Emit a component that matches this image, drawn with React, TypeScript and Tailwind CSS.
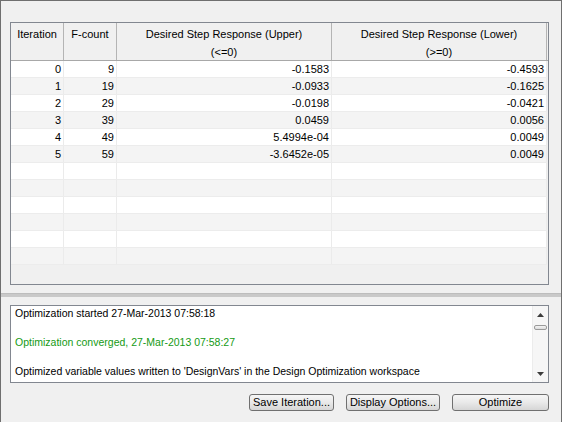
import React from "react";

// rows shown in the optimization progress table
const rows = [
  { it: "0", fc: "9", up: "-0.1583", lo: "-0.4593" },
  { it: "1", fc: "19", up: "-0.0933", lo: "-0.1625" },
  { it: "2", fc: "29", up: "-0.0198", lo: "-0.0421" },
  { it: "3", fc: "39", up: "0.0459", lo: "0.0056" },
  { it: "4", fc: "49", up: "5.4994e-04", lo: "0.0049" },
  { it: "5", fc: "59", up: "-3.6452e-05", lo: "0.0049" },
];

const emptyRows = 6;

const HeaderCell = ({ w, lines }: { w: string; lines: string[] }) => (
  <div className={`${w} h-full border-r border-[#b4b4b4] text-center pt-[2px] leading-[18px]`}>
    {lines.map((l) => (
      <div key={l}>{l}</div>
    ))}
  </div>
);

const Cell = ({ w, text }: { w: string; text?: string }) => (
  <div className={`${w} h-full border-r border-[#ebebeb] text-right pr-[2px] leading-[16px]`}>
    {text}
  </div>
);

const Button = ({ w, label }: { w: string; label: string }) => (
  <button
    type="button"
    className={`${w} h-[17px] rounded-[3px] border border-[#707070] bg-linear-to-b from-[#f6f6f6] via-[#e9e9e9] to-[#d6d6d6] text-[11px] leading-[15px] text-black`}
  >
    {label}
  </button>
);

const App: React.FC = () => {
  return (
    <div
      className="w-[562px] h-[422px] bg-[#f0f0f0] border-x border-t border-[#6f6f6f] flex flex-col text-black overflow-hidden"
      style={{ fontFamily: '"Liberation Sans", Arial, sans-serif' }}
    >
      {/* Table */}
      <div className="mt-[21px] ml-[9px] w-[539px] h-[263px] border border-[#828790] bg-[#f0f0f0] flex flex-col text-[11px]">
        <div className="h-[38px] flex border-b border-[#a8a8a8] shrink-0">
          <HeaderCell w="w-[53px]" lines={["Iteration"]} />
          <HeaderCell w="w-[53px]" lines={["F-count"]} />
          <HeaderCell w="w-[215px]" lines={["Desired Step Response (Upper)", "(<=0)"]} />
          <HeaderCell w="w-[215px]" lines={["Desired Step Response (Lower)", "(>=0)"]} />
        </div>
        {rows.map((r, i) => (
          <div
            key={r.it}
            className={`h-[17px] w-[536px] flex border-b border-[#ececec] shrink-0 ${i % 2 ? "bg-[#f4f4f4]" : "bg-white"}`}
          >
            <Cell w="w-[53px]" text={r.it} />
            <Cell w="w-[53px]" text={r.fc} />
            <Cell w="w-[215px]" text={r.up} />
            <Cell w="w-[215px]" text={r.lo} />
          </div>
        ))}
        {Array.from({ length: emptyRows }).map((_, i) => (
          <div
            key={i}
            className={`h-[17px] w-[536px] flex border-b border-[#ececec] shrink-0 ${i % 2 ? "bg-[#f4f4f4]" : "bg-white"}`}
          >
            <Cell w="w-[53px]" />
            <Cell w="w-[53px]" />
            <Cell w="w-[215px]" />
            <Cell w="w-[215px]" />
          </div>
        ))}
      </div>

      {/* Splitter */}
      <div className="mt-[8px] h-[4px] bg-[#c9c9c9] border-t border-[#bdbdbd]" />

      {/* Log */}
      <div className="mt-[8px] ml-[9px] w-[539px] h-[78px] border border-[#828790] bg-white flex">
        <div className="flex-1 pl-[4px] overflow-hidden text-[10.5px] leading-[14.5px] pt-[0px]">
          <div>Optimization started 27-Mar-2013 07:58:18</div>
          <div>&nbsp;</div>
          <div className="text-[#149a14]">Optimization converged, 27-Mar-2013 07:58:27</div>
          <div>&nbsp;</div>
          <div>Optimized variable values written to 'DesignVars' in the Design Optimization workspace</div>
          <div>Initial values have been updated with optimized values.</div>
        </div>
        <div className="w-[16px] h-full bg-[#f6f6f6] border-l border-[#ececec] flex flex-col items-center">
          <div className="h-[17px] flex items-center justify-center">
            <svg width="7" height="4" viewBox="0 0 7 4">
              <path d="M3.5 0 L7 4 L0 4 Z" fill="#3c3c3c" />
            </svg>
          </div>
          <div className="mt-[2px] w-[13px] h-[5px] rounded-[2px] border border-[#9a9a9a] bg-linear-to-b from-[#f4f4f4] to-[#dcdcdc]" />
          <div className="flex-1" />
          <div className="h-[17px] flex items-center justify-center">
            <svg width="7" height="4" viewBox="0 0 7 4">
              <path d="M0 0 L7 0 L3.5 4 Z" fill="#3c3c3c" />
            </svg>
          </div>
        </div>
      </div>

      {/* Buttons */}
      <div className="mt-[11px] mr-[12px] flex justify-end gap-[12px]">
        <Button w="w-[85px]" label="Save Iteration..." />
        <Button w="w-[94px]" label="Display Options..." />
        <Button w="w-[97px]" label="Optimize" />
      </div>
    </div>
  );
};

export default App;
